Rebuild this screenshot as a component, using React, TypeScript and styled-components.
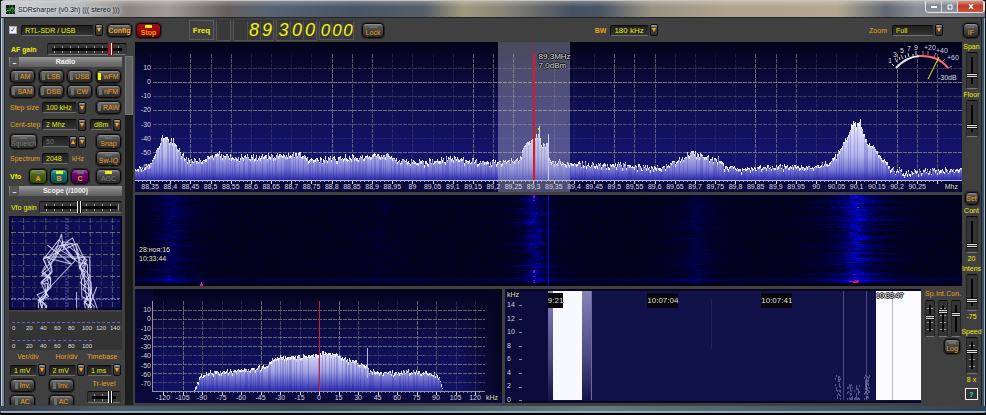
import React from "react";
import styled, { createGlobalStyle, css } from "styled-components";

const GlobalStyle = createGlobalStyle`
  *, *::before, *::after { box-sizing: border-box; }
  html, body { margin: 0; padding: 0; background: #000; }
  body, button, input, select {
    font-family: "Liberation Sans", Arial, sans-serif;
    font-size: 7px;
    line-height: 9px;
  }
`;

/* ---------- data helpers ---------- */

type Point = [number, number];

function makeRandom(seed: number) {
  let a = seed;
  return () => {
    a = (a + 0x6d2b79f5) | 0;
    let t = Math.imul(a ^ (a >>> 15), 1 | a);
    t = (t + Math.imul(t ^ (t >>> 7), 61 | t)) ^ t;
    return ((t ^ (t >>> 14)) >>> 0) / 4294967296;
  };
}

function levelAt(points: Point[], x: number) {
  for (let i = 1; i < points.length; i++) {
    if (x <= points[i][0]) {
      const [x0, y0] = points[i - 1];
      const [x1, y1] = points[i];
      return y0 + ((y1 - y0) * (x - x0)) / (x1 - x0);
    }
  }
  return points[points.length - 1][1];
}

function buildTrace(points: Point[], base: number, noise: number, seed: number) {
  const rnd = makeRandom(seed);
  const from = points[0][0];
  const to = points[points.length - 1][0];
  let fill = `M${from} ${base}`;
  let tips = "";
  let streaks = "";
  for (let x = from; x < to; x++) {
    const y = Math.min(base - 1, Math.round(levelAt(points, x) + (rnd() + rnd() - 1) * noise));
    fill += `V${y}h1`;
    tips += `M${x} ${y}h1v${1 + Math.floor(rnd() * 3)}h-1z`;
    if (rnd() > 0.6) streaks += `M${x} ${y + 3}h1V${base}h-1z`;
  }
  return { fill: `${fill}V${base}z`, tips, streaks };
}

const RF_POINTS: Point[] = [
  [0, 127], [6, 126], [10, 125], [15, 122], [20, 111], [24, 103], [27, 94], [31, 95], [34, 100], [38, 99],
  [43, 108], [50, 116], [57, 119], [66, 119], [72, 115], [84, 113], [100, 116], [120, 115], [150, 114],
  [166, 112], [175, 117], [195, 117], [215, 115], [240, 113], [254, 114], [262, 117], [280, 120],
  [300, 119], [318, 116], [340, 119], [355, 120], [375, 119], [385, 116], [390, 102], [398, 98],
  [402, 93], [404, 87], [406, 101], [412, 104], [415, 118], [430, 122], [460, 122], [490, 123],
  [510, 125], [530, 125], [542, 118], [552, 113], [558, 110], [566, 114], [586, 118], [589, 124],
  [605, 127], [640, 124], [665, 125], [680, 125], [694, 121], [702, 113], [709, 100], [715, 88],
  [718, 79], [721, 84], [725, 80], [728, 92], [732, 101], [737, 103], [744, 114], [752, 122],
  [758, 128], [775, 130], [800, 128], [827, 127],
];

const IF_POINTS: Point[] = [
  [59, 101], [62, 94], [66, 87], [72, 84], [85, 83], [100, 82], [118, 80], [132, 77], [138, 70], [152, 68],
  [170, 67], [188, 64], [200, 65], [212, 70], [226, 75], [231, 77], [234, 81], [248, 84], [270, 83],
  [290, 84], [302, 86], [305, 91], [308, 101],
];

const rfTrace = buildTrace(RF_POINTS, 138, 4, 11);
const ifTrace = buildTrace(IF_POINTS, 102, 3, 5);

const range = (n: number) => Array.from({ length: n }, (_, i) => i);

const RF_LABELS = range(39).map((i) => String((8835 + i * 5) / 100).replace(".", ","));
const IF_LABELS = range(17).map((i) => String(-120 + i * 15));

interface HotSpot { x: number; w: number; gain: number; }
const HOT_SPOTS: HotSpot[] = [
  { x: 36, w: 17, gain: 0.5 },
  { x: 399, w: 11, gain: 0.85 },
  { x: 560, w: 18, gain: 0.3 },
  { x: 721, w: 19, gain: 1.15 },
  { x: 245, w: 26, gain: 0.08 },
];

function buildWaterfall() {
  const rnd = makeRandom(77);
  const levels: string[] = Array(12).fill("");
  let hot = "";
  for (let y = 0; y < 88; y++) {
    const band = y > 78 ? 1.25 : 1;
    const floor = y > 82 && y < 87 ? 0.12 : 0;
    const spots = HOT_SPOTS.map((s) => ({
      x: s.x + (rnd() - 0.5) * 10,
      w: s.w * (0.35 + rnd() * 1.1),
      gain: s.gain * (0.45 + rnd() * 0.6) * band,
    }));
    for (let x = 0; x < 827; x += 2) {
      let v = floor + rnd() * 0.1;
      for (const s of spots) {
        const d = Math.abs(x - s.x) / s.w;
        if (d < 5) v += s.gain * Math.exp(-d * 1.1) * (0.5 + rnd() * 0.6);
      }
      const level = Math.min(11, Math.floor(v * 12));
      if (level > 0) levels[level] += `M${x} ${y}h2v1h-2z`;
      if (v > 1.18 || (x === 398 && (y < 6 || y > 74) && rnd() > 0.4)) hot += `M${x} ${y}h2v1h-2z`;
    }
  }
  return { levels, hot };
}
const waterfall = buildWaterfall();

function buildScope() {
  const rnd = makeRandom(23);
  const lines: string[] = [];
  for (let i = 0; i < 6; i++) {
    const pts: string[] = [];
    for (let y = 96; y > 38; y -= 6) pts.push(`${25 + (94 - y) * 0.17 + rnd() * 12},${y + rnd() * 7}`);
    pts.push(`${42 + rnd() * 12},${22 + rnd() * 18}`);
    pts.push(`${56 + rnd() * 12},${24 + rnd() * 20}`);
    for (let y = 40; y < 98; y += 7) pts.push(`${66 + (y - 34) * 0.15 + rnd() * 12},${y + rnd() * 7}`);
    lines.push(pts.join(" "));
  }
  lines.push("46,36 52,18 54,32 57,26 63,22 68,34 73,60 80,72 88,94");
  lines.push("38,29 62,48 34,41 80,41 81,94", "38,74 66,44 54,30");
  lines.push("67,94 67,76", "78,94 87,71");
  return lines;
}
const scopeLines = buildScope();

function buildSonogramNoise() {
  const rnd = makeRandom(4);
  let out = "";
  for (let i = 0; i < 150; i++) {
    const column = [330, 342, 349, 359][Math.floor(rnd() * 4)];
    const x = Math.round(column + rnd() * 5);
    const y = Math.round((column === 330 || column === 359 ? 86 : 95) + rnd() * 24);
    out += `M${x} ${Math.min(y, 109)}h1v2h-1z`;
  }
  return out;
}
const sonogramNoise = buildSonogramNoise();

/* ---------- window chrome ---------- */

const Window = styled.div`
  height: 100vh;
  display: flex;
  flex-direction: column;
  padding: 0 5px 9px;
  border-radius: 5px;
  overflow: hidden;
  background:
    linear-gradient(#000, #000) bottom / 100% 2px no-repeat,
    linear-gradient(#a9b9c6, #8497a6) 0 calc(100% - 2px) / 100% 2px no-repeat,
    linear-gradient(90deg, #333f4a, #4c5d6c 12%, #39495a 30%, #667880 60%, #2f4052) bottom / 100% 9px no-repeat,
    linear-gradient(90deg, #23282e 0 1px, #c3cdd6 1px 2px, #75879a 2px 4px, #252a30 4px 5px, transparent 5px) left / 5px 100% no-repeat,
    linear-gradient(90deg, #1c2026 0 1px, #37516b 1px 3px, #9fb4c6 3px 4px, #111 4px) right / 5px 100% no-repeat,
    #3f3f3f;
`;

const TitleBar = styled.header`
  height: 18px;
  flex: none;
  display: flex;
  align-items: flex-start;
  margin: 0 -4px;
  padding-left: 5px;
  border-top: 1px solid #c9c3bb;
  border-bottom: 1px solid #22262b;
  background:
    linear-gradient(rgba(255, 255, 255, 0.28), transparent 6px),
    linear-gradient(90deg, #c3c8cf 0, #aeb2b8 8%, #8d8580 13%, #a09c98 17%, #65605f 23%, #596473 27%, #4a5564 36%,
      #565e69 43%, #a1997f 47%, #8a8577 51%, #465161 58%, #4b5563 61%, #9a9283 66%, #b1a48f 74%, #b3a791 85%,
      #606872 90%, #8d9096 93%, #7b7f85 100%);
`;

const AppIcon = styled.svg`
  width: 9px;
  height: 9px;
  margin: 4px 3px 0 0;
`;

const Title = styled.h1`
  margin: 4px 0 0;
  font-size: 7px;
  line-height: 9px;
  font-weight: 400;
  color: #16181c;
  text-shadow: 0 0 4px #fff, 0 0 6px #fff;
  flex: 1;
`;

const WindowButtons = styled.div`
  display: flex;
  border: 1px solid #e6e9ec;
  border-top: 0;
  border-radius: 0 0 4px 4px;
  overflow: hidden;
`;

const WindowButton = styled.button<{ $close?: boolean }>`
  width: ${(p) => (p.$close ? 26 : 16)}px;
  height: 11px;
  padding: 0;
  border: 0;
  border-right: 1px solid #d6d9dd;
  display: flex;
  align-items: center;
  justify-content: center;
  background: ${(p) =>
    p.$close ? "linear-gradient(#d99383, #bb3a24 45%, #c9563a)" : "linear-gradient(#b9bec5, #7d848d 45%, #9197a0)"};
`;

/* ---------- shared controls ---------- */

const Caption = styled.span<{ $bright?: boolean; $bold?: boolean; $width?: number }>`
  flex: none;
  color: ${(p) => (p.$bright ? "#eeee10" : "#e6a01c")};
  font-weight: ${(p) => (p.$bold ? 700 : 400)};
  width: ${(p) => (p.$width ? `${p.$width}px` : "auto")};
  white-space: nowrap;
`;

const Row = styled.div<{ $height?: number; $gap?: number; $spread?: boolean }>`
  display: flex;
  align-items: center;
  min-height: ${(p) => p.$height ?? 15}px;
  gap: ${(p) => p.$gap ?? 0}px;
  justify-content: ${(p) => (p.$spread ? "space-between" : "flex-start")};
`;

type Tone = "gray" | "red" | "green" | "teal" | "purple";
const TONES: Record<Tone, string> = {
  gray: "linear-gradient(#9a9a9a, #5c5c5c 18%, #404040 55%, #2a2a2a)",
  red: "linear-gradient(#8d1515, #a80a0a 30%, #6d0202)",
  green: "linear-gradient(#8aa84a, #4d6b17 30%, #31480c)",
  teal: "linear-gradient(#4fc0c0, #0e7478 30%, #064b50)",
  purple: "linear-gradient(#b04fb4, #6d0873 30%, #45024b)",
};

const KeyButton = styled.button<{ $tone?: Tone; $width?: number; $stack?: boolean; $dim?: boolean }>`
  flex: none;
  width: ${(p) => p.$width ?? 25}px;
  height: ${(p) => (p.$stack ? 15 : 13)}px;
  padding: 0;
  display: flex;
  flex-direction: ${(p) => (p.$stack ? "column" : "row")};
  align-items: center;
  justify-content: center;
  gap: ${(p) => (p.$stack ? 1 : 2)}px;
  border: 1px solid #0a0a0a;
  border-radius: 4px;
  background: ${(p) => TONES[p.$tone ?? "gray"]};
  box-shadow: 0 0 0 1px #262626;
  color: ${(p) => (p.$dim ? "#7d7d7d" : "#f0a01a")};
  white-space: nowrap;
  line-height: 7px;
`;

const Led = styled.i<{ $on?: boolean; $wide?: boolean }>`
  flex: none;
  width: ${(p) => (p.$wide ? 7 : 3)}px;
  height: ${(p) => (p.$wide ? 3 : 7)}px;
  background: ${(p) => (p.$on ? "#f6ee08" : "#6c6c6c")};
`;

function SideKey({ label, on }: { label: string; on?: boolean }) {
  return (
    <KeyButton type="button" aria-pressed={!!on}>
      <Led $on={on} />
      {label}
    </KeyButton>
  );
}

function TopKey(props: { label: string; on?: boolean; tone?: Tone; width?: number; dim?: boolean; bold?: boolean }) {
  return (
    <KeyButton type="button" aria-pressed={!!props.on} $stack $tone={props.tone} $width={props.width} $dim={props.dim}>
      <Led $wide $on={props.on} />
      {props.bold ? <b>{props.label}</b> : props.label}
    </KeyButton>
  );
}

const ComboFrame = styled.label<{ $width: number }>`
  flex: none;
  width: ${(p) => p.$width}px;
  display: flex;
  align-items: center;
  gap: 1px;
`;

const field = css`
  height: 11px;
  padding: 0 0 0 3px;
  border: 1px solid;
  border-color: #0a0a0a #303030 #6c6c6c #161616;
  border-radius: 2px;
  background: linear-gradient(#1e1e1e, #343434);
  color: #e6ee12;
`;

const ComboSelect = styled.select<{ $large?: boolean }>`
  ${field}
  appearance: none;
  flex: 1;
  min-width: 0;
  font-size: ${(p) => (p.$large ? 8 : 7)}px;
`;

const ArrowBox = styled.span`
  flex: none;
  width: 8px;
  height: 12px;
  display: flex;
  align-items: center;
  justify-content: center;
  border: 1px solid #0c0c0c;
  border-radius: 2px;
  background: linear-gradient(#b5b5b5, #4c4c4c 25%, #303030);
  pointer-events: none;
`;

function Arrow({ up }: { up?: boolean }) {
  return (
    <ArrowBox>
      <svg width="4" height="4" viewBox="0 0 4 4" aria-hidden="true">
        <path d={up ? "M0 4h4L2 0z" : "M0 0h4L2 4z"} fill="#ffa51a" />
      </svg>
    </ArrowBox>
  );
}

function Combo({ name, value, width, large }: { name: string; value: string; width: number; large?: boolean }) {
  return (
    <ComboFrame $width={width}>
      <ComboSelect aria-label={name} $large={large} defaultValue={value}>
        <option>{value}</option>
      </ComboSelect>
      <Arrow />
    </ComboFrame>
  );
}

const Field = styled.input<{ $width: number }>`
  ${field}
  flex: none;
  width: ${(p) => p.$width}px;
  &:disabled { color: #777; }
`;

const Slider = styled.input<{ $red?: boolean }>`
  appearance: none;
  flex: 1;
  min-width: 0;
  height: 12px;
  margin: 0;
  border: 1px solid;
  border-color: #0a0a0a #333 #777 #222;
  border-radius: 2px;
  background:
    linear-gradient(#050505, #050505) center / calc(100% - 8px) 3px no-repeat,
    repeating-linear-gradient(90deg, transparent 0 4px, #9a9a9a 4px 5px, transparent 5px 8px) center / calc(100% - 4px) 7px no-repeat,
    #363636;
  &::-webkit-slider-thumb {
    appearance: none;
    width: 5px;
    height: 12px;
    background: ${(p) =>
      p.$red
        ? "linear-gradient(90deg, #b01818 0 3px, #fff 3px 4px, #701010 4px)"
        : "linear-gradient(90deg, #eee 0 1px, #222 1px 3px, #eee 3px 4px, #111 4px)"};
  }
`;

const Fader = styled.input<{ $ticks?: boolean; $narrow?: boolean }>`
  appearance: none;
  writing-mode: vertical-lr;
  direction: rtl;
  flex: none;
  width: ${(p) => (p.$narrow ? 10 : 12)}px;
  height: 37px;
  margin: 0;
  border: 1px solid;
  border-color: #0a0a0a #222 #777 #222;
  border-radius: 2px;
  background:
    linear-gradient(#050505, #050505) center / 2px calc(100% - 8px) no-repeat,
    ${(p) =>
      p.$ticks
        ? "repeating-linear-gradient(transparent 0 4px, #999 4px 5px, transparent 5px 7px) center / 6px calc(100% - 6px) no-repeat,"
        : ""}
    #343434;
  &::-webkit-slider-thumb {
    appearance: none;
    width: ${(p) => (p.$narrow ? 8 : 10)}px;
    height: 5px;
    background: linear-gradient(#111 0 1px, #ddd 1px 2px, #333 2px 3px, #ddd 3px 4px, #111 4px);
  }
`;

/* ---------- toolbar ---------- */

const Toolbar = styled.div`
  height: 24px;
  flex: none;
  display: flex;
  align-items: center;
  padding: 0 2px 0 4px;
  background: #404040;
`;

const Tick = styled.input`
  appearance: none;
  width: 8px;
  height: 8px;
  margin: 0 4px 0 0;
  border: 1px solid #aab;
  background: #eef;
  display: flex;
  align-items: center;
  justify-content: center;
  &:checked::after {
    content: "✓";
    font-family: "DejaVu Sans", sans-serif;
    color: #26358c;
  }
`;

const Cluster = styled.div<{ $push?: boolean; $gap: number; $after?: number }>`
  display: flex;
  align-items: center;
  gap: ${(p) => p.$gap}px;
  margin-left: ${(p) => (p.$push ? "auto" : 0)};
  margin-right: ${(p) => p.$after ?? 0}px;
`;

const Cells = styled.div`
  display: flex;
  border: 1px solid #555;
  border-top-color: #333;
  background: #3a3a3a;
`;

const Cell = styled.span<{ $small?: boolean }>`
  width: ${(p) => (p.$small ? 11 : 13)}px;
  height: ${(p) => (p.$small ? 17 : 19)}px;
  line-height: ${(p) => (p.$small ? 17 : 19)}px;
  font-size: ${(p) => (p.$small ? 17 : 18)}px;
  font-style: italic;
  text-align: center;
  color: #f4f410;
  & + & { border-left: 1px solid #505050; }
`;

const FreqLabel = styled.span`
  width: 25px;
  height: 20px;
  line-height: 20px;
  border: 1px solid #5a5a5a;
  font-size: 8px;
  font-weight: 700;
  text-align: center;
  color: #f4f410;
`;

function Digits({ value, small }: { value: string; small?: boolean }) {
  return (
    <Cells>
      {value.split("").map((d, i) => (
        <Cell key={i} $small={small}>{d}</Cell>
      ))}
    </Cells>
  );
}

/* ---------- layout ---------- */

const Content = styled.div`
  flex: 1;
  min-height: 0;
  display: flex;
  background: #404040;
`;

const Sidebar = styled.aside`
  flex: none;
  width: 130px;
  padding-left: 4px;
  display: flex;
  flex-direction: column;
`;

const SidebarBody = styled.div`
  flex: 1;
  min-height: 0;
  display: flex;
  gap: 3px;
  padding-right: 2px;
  margin-bottom: 1px;
`;

const Panels = styled.div`
  flex: 1;
  min-width: 0;
  overflow: hidden;
`;

const ScrollTrack = styled.div`
  width: 8px;
  background: #1c1c1c;
`;

const ScrollThumb = styled.div`
  height: 17%;
  border: 1px solid #777;
  background: #606060;
`;

const PanelHeader = styled.h2`
  position: relative;
  margin: 1px 0 2px;
  height: 10px;
  font-size: 7px;
  line-height: 10px;
  font-weight: 700;
  text-align: center;
  color: #f2f2f2;
  background: linear-gradient(#999, #777 50%, #5d5d5d);
`;

const Collapse = styled.button`
  position: absolute;
  left: 1px;
  top: 0;
  width: 9px;
  height: 10px;
  padding: 0;
  border: 0;
  background: #555;
  color: #fff;
  font-weight: 700;
`;

const Controls = styled.div`
  padding: 0 1px;
`;

const ScopeView = styled.svg`
  display: block;
  width: 100%;
  height: 94px;
  background: #0d0d52;
`;

const Meters = styled.div`
  margin: 2px 0;
  height: 38px;
  padding: 10px 0 0 3px;
  background: #343434;
`;

const Scale = styled.div<{ $cells: number }>`
  display: grid;
  grid-template-columns: repeat(8, 14px);
  width: ${(p) => p.$cells * 14 - 4}px;
  height: 14px;
  padding-top: 1px;
  margin-bottom: 4px;
  font-size: 6px;
  color: #ddd;
  border-top: 1px dashed #6464d8;
`;

const ThreeColumns = styled.div`
  display: grid;
  grid-template-columns: 36px 36px 34px;
  justify-content: space-between;
  padding: 0 1px;
`;

const Column = styled.div<{ $gap: number; $center?: boolean }>`
  display: flex;
  flex-direction: column;
  align-items: ${(p) => (p.$center ? "center" : "stretch")};
  gap: ${(p) => p.$gap}px;
`;

const Main = styled.main`
  flex: 1;
  min-width: 0;
  display: grid;
  grid-template-columns: minmax(0, 1fr);
  grid-template-rows: minmax(0, 150fr) minmax(0, 91fr) minmax(0, 114fr);
  gap: 3px;
  padding-bottom: 3px;
`;

const BottomRow = styled.div`
  display: grid;
  grid-template-columns: minmax(0, 367fr) minmax(0, 416fr) 38px;
  grid-template-rows: minmax(0, 1fr);
  gap: 3px;
`;

const Layers = styled.section`
  position: relative;
  display: grid;
  grid-template: minmax(0, 1fr) / minmax(0, 1fr);
  overflow: hidden;
  & > * { grid-area: 1 / 1; }
`;

const Plot = styled.svg`
  display: block;
  width: 100%;
  height: 100%;
`;

const XLabels = styled.div<{ $count: number; $left: number; $right: number }>`
  align-self: end;
  height: 10px;
  display: grid;
  grid-template-columns: repeat(${(p) => p.$count}, minmax(0, 1fr));
  padding-left: ${(p) => p.$left}%;
  padding-right: ${(p) => p.$right}%;
  color: #d6d6de;
  & > span {
    display: flex;
    justify-content: center;
    white-space: nowrap;
  }
`;

const YAxis = styled.div<{ $rows: string; $left?: boolean }>`
  display: grid;
  grid-template-rows: ${(p) => p.$rows};
  width: 16px;
  padding-left: ${(p) => (p.$left ? 2 : 0)}px;
  text-align: ${(p) => (p.$left ? "left" : "right")};
  line-height: 7px;
  color: #d6d6de;
`;

const YAxisLabels = styled.div`
  grid-row: 2;
  min-height: 0;
  display: flex;
  flex-direction: column;
  justify-content: space-between;
`;

function YLabels({ rows, labels, left }: { rows: string; labels: string[]; left?: boolean }) {
  return (
    <YAxis $rows={rows} $left={left}>
      <YAxisLabels>{labels.map((t) => <span key={t}>{t}</span>)}</YAxisLabels>
    </YAxis>
  );
}

const Overlay = styled.div<{ $left?: string; $right?: string; $top: string; $size?: number; $boxed?: boolean }>`
  position: absolute;
  left: ${(p) => p.$left ?? "auto"};
  right: ${(p) => p.$right ?? "auto"};
  top: ${(p) => p.$top};
  font-size: ${(p) => p.$size ?? 7}px;
  line-height: ${(p) => (p.$boxed ? 15 : 9)}px;
  background: ${(p) => (p.$boxed ? "#08080c" : "transparent")};
  color: #e2e2e2;
  white-space: nowrap;
  text-shadow: -1px 0 #000, 1px 0 #000, 0 -1px #000, 0 1px #000;
`;

const Meter = styled.svg`
  position: absolute;
  right: 0;
  top: 0;
  width: 78px;
  height: 46px;
`;

const Rail = styled.aside`
  flex: none;
  width: 19px;
  display: flex;
  flex-direction: column;
  justify-content: space-between;
  padding-bottom: 6px;
`;

const RailGap = styled.div`
  height: 4px;
`;

const FaderRow = styled.div`
  display: flex;
  justify-content: space-between;
  padding: 0 1px;
`;

const HelpButton = styled.button`
  width: 13px;
  height: 12px;
  padding: 0;
  margin-top: 3px;
  border: 1px solid #eee;
  background: #333;
  color: #16e0e0;
  font-weight: 700;
  line-height: 9px;
`;

/* ---------- plots ---------- */

const ROW_STRENGTH = [0.35, 0.85, 0.35, 0.8, 0.5, 0.15, 0.75];

function RfPlot() {
  return (
    <Plot viewBox="0 0 827 150" preserveAspectRatio="none" shapeRendering="crispEdges" aria-hidden="true">
      <defs>
        <linearGradient id="sky" x1="0" y1="0" x2="0" y2="1">
          <stop offset="0" stopColor="#03031a" />
          <stop offset="0.4" stopColor="#0e0e50" />
          <stop offset="0.75" stopColor="#14146c" />
          <stop offset="1" stopColor="#14146c" />
        </linearGradient>
        <linearGradient id="rfFill" gradientUnits="userSpaceOnUse" x1="0" y1="84" x2="0" y2="138">
          <stop offset="0" stopColor="#e4e4fa" />
          <stop offset="0.55" stopColor="#b4b4ec" />
          <stop offset="0.8" stopColor="#7b7bd6" />
          <stop offset="1" stopColor="#2b2bab" />
        </linearGradient>
      </defs>
      <rect width="827" height="150" fill="url(#sky)" />
      {ROW_STRENGTH.map((s, i) => (
        <path key={i} d={`M18 ${26.5 + i * 14}H827`} stroke="#8a8a78" strokeOpacity={s} strokeDasharray="4 1" />
      ))}
      {range(40).map((i) => (
        <path
          key={i}
          d={`M${Math.round(15 + i * 20.18) + 0.5} 12V138`}
          stroke="#8a8a7c"
          strokeOpacity={[0.1, 0.16, 0.75, 0.6, 0.6, 0.2, 0.22][i % 7]}
          strokeDasharray="4 1"
        />
      ))}
      <path d={rfTrace.fill} fill="url(#rfFill)" />
      <path d={rfTrace.streaks} fill="#2020a0" fillOpacity="0.22" />
      <path d={rfTrace.tips} fill="#f6f6ff" fillOpacity="0.9" />
      <path d="M413 92h1v46h-1z" fill="#d8d8f0" />
      <rect y="139" width="827" height="11" fill="#09093c" />
      <path d="M0 138.5H827" stroke="#b8b8d8" />
      {range(200).map((i) => (
        <path
          key={i}
          d={`M${Math.round(15 + (i - 3) * 4.036) + 0.5} 139v${(i - 3) % 5 === 0 ? 3 : 1}`}
          stroke="#d8d8e8"
          strokeOpacity={(i - 3) % 5 === 0 ? 1 : 0.6}
        />
      ))}
      <rect x="363" width="72" height="150" fill="#c8c8d8" fillOpacity="0.36" />
      <path d="M398 0h1v12h-1z" fill="#b02030" fillOpacity="0.7" />
      <path d="M398 12h2v126h-2z" fill="#e01824" />
      <path d="M403 86h2v2h-2z" fill="#f0e020" />
    </Plot>
  );
}

function SMeter() {
  const labels: [string, number, number, string][] = [
    ["1", 4, 21, "#ddd"], ["3", 9, 15, "#ddd"], ["5", 16, 11, "#ddd"], ["7", 23, 9, "#ddd"], ["9", 30, 8, "#ddd"],
    ["+20", 40, 8, "#c8d4ee"], ["+40", 52, 11, "#c8d4ee"], ["+60", 63, 18, "#c8d4ee"], ["-30dB", 54, 38, "#ddd"],
  ];
  return (
    <Meter viewBox="0 0 78 46" role="img" aria-label="Signal meter">
      <path d="M12 26Q22 15 35 14" fill="none" stroke="#e8e8e8" strokeWidth="2" />
      <path d="M35 14Q54 13 64 26" fill="none" stroke="#f07070" strokeWidth="2" />
      <path d="M10 24l-2-2M13 20l-2-4M19 17l-2-4M25 15l-1-4M32 13v-4M16 18l-1-3M22 16l-1-3M29 14v-2" stroke="#ccc" />
      <path d="M39 13V9M44 13V9M50 15l2-4M58 20l3-3M64 26l4-2" stroke="#e06868" />
      <path d="M44 37L55 15" stroke="#f4ee10" strokeWidth="1" />
      {labels.map(([text, x, y, fill]) => (
        <text key={text} x={x} y={y} fill={fill} fontSize="7">{text}</text>
      ))}
    </Meter>
  );
}

function WaterfallPlot() {
  return (
    <Plot viewBox="0 0 827 91" preserveAspectRatio="none" shapeRendering="crispEdges" aria-hidden="true">
      <rect width="827" height="91" fill="#01011a" />
      {waterfall.levels.map((d, i) => (
        <path key={i} d={d} fill={`rgb(0,0,${24 + i * 20})`} />
      ))}
      <path d={waterfall.hot} fill="#9010a8" />
      <path d="M413 0h1v91h-1z" fill="#0808b8" />
      <path d="M714 86h9v1h-9z M718 87h5v1h-5z" fill="#e01060" />
      <path d="M65 91v-2h1v-2h1v2h1v2z" fill="#e010a0" />
    </Plot>
  );
}

function IfPlot() {
  return (
    <Plot viewBox="0 0 367 114" preserveAspectRatio="none" shapeRendering="crispEdges" aria-hidden="true">
      <defs>
        <linearGradient id="ifFill" gradientUnits="userSpaceOnUse" x1="0" y1="62" x2="0" y2="102">
          <stop offset="0" stopColor="#e2e2fa" />
          <stop offset="0.5" stopColor="#a4a4e4" />
          <stop offset="1" stopColor="#2b2bab" />
        </linearGradient>
        <linearGradient id="ifSky" x1="0" y1="0" x2="0" y2="1">
          <stop offset="0" stopColor="#04041c" />
          <stop offset="0.5" stopColor="#0f0f54" />
          <stop offset="1" stopColor="#13136a" />
        </linearGradient>
        <linearGradient id="ifEdge" x1="0" y1="0" x2="1" y2="0">
          <stop offset="0" stopColor="#05051f" stopOpacity="0" />
          <stop offset="1" stopColor="#05051f" />
        </linearGradient>
      </defs>
      <rect width="367" height="114" fill="url(#ifSky)" />
      <rect width="18" height="114" fill="#070732" />
      <rect x="325" width="42" height="114" fill="url(#ifEdge)" />
      {range(9).map((i) => (
        <path key={i} d={`M18 ${21.5 + i * 9}H350`} stroke="#8a8a78" strokeOpacity={i % 3 === 2 ? 0.4 : 0.7} strokeDasharray="4 1" />
      ))}
      {range(17).map((i) => (
        <path
          key={i}
          d={`M${Math.round(28 + i * 19.5) + 0.5} 12V102`}
          stroke="#8a8a7c"
          strokeOpacity={[0.2, 0.75, 0.5, 0.25][i % 4]}
          strokeDasharray="4 1"
        />
      ))}
      <path d={ifTrace.fill} fill="url(#ifFill)" />
      <path d={ifTrace.streaks} fill="#2020a0" fillOpacity="0.25" />
      <path d={ifTrace.tips} fill="#f6f6ff" fillOpacity="0.9" />
      <path d="M232 59h1v30h-1z" fill="#b8b8e0" />
      <rect y="103" width="367" height="11" fill="#09093c" />
      <path d="M17.5 12V102.5H350" fill="none" stroke="#9090b0" />
      {range(82).map((i) => (
        <path
          key={i}
          d={`M${Math.round(28 + i * 3.9) + 0.5} 103v${i % 5 === 0 ? 3 : 1}`}
          stroke="#d8d8e8"
          strokeOpacity={i % 5 === 0 ? 1 : 0.6}
        />
      ))}
      <path d="M184 12h1v90h-1z" fill="#d01c30" />
    </Plot>
  );
}

function SonogramPlot() {
  return (
    <Plot viewBox="0 0 416 114" preserveAspectRatio="none" shapeRendering="crispEdges" aria-hidden="true">
      <defs>
        <linearGradient id="haze" x1="0" y1="0" x2="0" y2="1">
          <stop offset="0" stopColor="#8484b8" />
          <stop offset="0.6" stopColor="#4a4a84" />
          <stop offset="1" stopColor="#14144c" />
        </linearGradient>
      </defs>
      <rect width="416" height="114" fill="#12124a" />
      <rect width="43" height="114" fill="#0b0b3c" />
      <rect width="416" height="2" fill="#05051e" />
      <rect y="112" width="416" height="2" fill="#070726" />
      {range(8).map((i) => (
        <path key={i} d={`M14 ${Math.round(16 + i * 13.6) + 0.5}h3`} stroke="#8c8ca8" />
      ))}
      <rect x="43" y="2" width="5" height="109" fill="url(#haze)" />
      <rect x="77" y="2" width="10" height="109" fill="url(#haze)" />
      <path d="M86 2h1v109h-1z" fill="#6c6c9c" />
      <rect x="48" y="2" width="29" height="109" fill="#f8f8ff" />
      <path d="M206 10h1v50h-1z" fill="#22225a" />
      <path d="M338 2h1v109h-1z M361 2h1v109h-1z" fill="#4a4a80" />
      <path d={sonogramNoise} fill="#9a9ac0" fillOpacity="0.5" />
      <rect x="371" y="2" width="45" height="109" fill="#fafaff" />
      <path d="M387 2h1v109h-1z" fill="#b8b8cc" />
    </Plot>
  );
}

function Scope() {
  return (
    <ScopeView viewBox="0 0 112 94" preserveAspectRatio="none" role="img" aria-label="Scope trace">
      {range(8).map((i) => (
        <path key={i} d={`M2 ${5.5 + i * 11}H110`} stroke="#8a8a78" strokeOpacity={i % 2 ? 0.75 : 0.35} strokeDasharray="5 2" />
      ))}
      {range(10).map((i) => (
        <path key={i} d={`M${3.5 + i * 11} 2V94`} stroke="#8a8a78" strokeOpacity={i % 2 ? 0.6 : 0.3} strokeDasharray="5 2" />
      ))}
      <path d="M2 83.5H110M56.5 2V94" stroke="#5a5ad8" strokeDasharray="2 1" />
      {scopeLines.map((pts, i) => (
        <polyline key={i} points={pts} fill="none" stroke="#dedeff" strokeOpacity="0.85" strokeWidth="1" />
      ))}
      <path d="M0 0H112V94H0z" fill="none" stroke="#04041c" strokeOpacity="0.7" strokeWidth="4" />
    </ScopeView>
  );
}

/* ---------- page sections ---------- */

function TopToolbar() {
  return (
    <Toolbar>
      <Tick type="checkbox" aria-label="Source enabled" defaultChecked />
      <Cluster $gap={4} $after={28}>
        <Combo name="Source" value="RTL-SDR / USB" width={82} />
        <KeyButton type="button"><b>Config</b></KeyButton>
        <TopKey label="Stop" tone="red" on bold />
      </Cluster>
      <Cluster $gap={2} $after={8}>
        <FreqLabel>Freq</FreqLabel>
        <Digits value=" " />
        <Digits value=" 89" />
        <Digits value="300" />
        <Digits value="000" small />
      </Cluster>
      <TopKey label="Lock" width={22} />
      <Cluster $gap={4} $push>
        <Caption $bold>BW</Caption>
        <Combo name="BW" value="180 kHz" width={48} large />
      </Cluster>
      <Cluster $gap={5} $push $after={20}>
        <Caption>Zoom</Caption>
        <Combo name="Zoom" value="Full" width={51} />
      </Cluster>
      <TopKey label="IF" width={16} />
    </Toolbar>
  );
}

const MODES = [["AM", "LSB", "USB", "wFM"], ["SAM", "DSB", "CW", "nFM"]];

function SidePanel() {
  return (
    <Sidebar>
      <Row $height={14} $gap={8}>
        <Caption $bright $bold $width={30}>&nbsp;AF gain</Caption>
        <Slider $red type="range" aria-label="AF gain" defaultValue={82} />
        <span />
      </Row>
      <SidebarBody>
        <Panels>
          <PanelHeader><Collapse type="button" aria-label="Collapse Radio">–</Collapse>Radio</PanelHeader>
          <Controls>
            {MODES.map((modes) => (
              <Row key={modes[0]} $spread>
                {modes.map((m) => <SideKey key={m} label={m} on={m === "wFM"} />)}
              </Row>
            ))}
            <Row $height={17} $spread>
              <Row><Caption $width={32}>Step size</Caption><Combo name="Step size" value="100 kHz" width={44} /></Row>
              <SideKey label="RAW" />
            </Row>
            <Row $height={17} $spread>
              <Row><Caption $width={32}>Cent-step</Caption><Combo name="Cent-step" value="2 Mhz" width={44} /></Row>
              <Combo name="Unit" value="dBm" width={31} />
            </Row>
            <Row $height={17} $spread>
              <Row>
                <Cluster $gap={0} $after={5}><TopKey label="Squelch" width={27} dim /></Cluster>
                <Field $width={27} aria-label="Squelch level" defaultValue="50" disabled />
                <Cluster $gap={1}><Arrow up /><Arrow /></Cluster>
              </Row>
              <TopKey label="Snap" />
            </Row>
            <Row $height={17} $spread>
              <Row>
                <Caption $width={32}>Spectrum</Caption>
                <Cluster $gap={3}><Field $width={27} aria-label="Spectrum" defaultValue="2048" /><Caption>kHz</Caption></Cluster>
              </Row>
              <TopKey label="Sw-IQ" />
            </Row>
            <Row $height={18} $spread>
              <Row $gap={3}>
                <Caption $bright $bold $width={16}>Vfo</Caption>
                <TopKey label="A" tone="green" width={18} bold />
                <TopKey label="B" tone="teal" width={18} bold on />
                <TopKey label="C" tone="purple" width={18} bold />
              </Row>
              <TopKey label="AGC" on dim />
            </Row>
          </Controls>
          <PanelHeader><Collapse type="button" aria-label="Collapse Scope">–</Collapse>Scope (/1000)</PanelHeader>
          <Row $height={18}>
            <Caption $bright $width={30}>&nbsp;Vfo gain</Caption>
            <Slider type="range" aria-label="Vfo gain" defaultValue={49} />
          </Row>
          <Scope />
          <Meters>
            <Scale $cells={8}>{range(8).map((i) => <span key={i}>{i * 20}</span>)}</Scale>
            <Scale $cells={6}>{range(6).map((i) => <span key={i}>{i * 20}</span>)}</Scale>
          </Meters>
          <ThreeColumns>
            <Column $gap={3}>
              <Column $gap={0} $center><Caption>Ver/div</Caption></Column>
              <Combo name="Ver/div" value="1 mV" width={36} />
              <SideKey label="Inv." />
              <SideKey label="AC" />
            </Column>
            <Column $gap={3}>
              <Column $gap={0} $center><Caption>Hor/div</Caption></Column>
              <Combo name="Hor/div" value="2 mV" width={36} />
              <SideKey label="Inv." />
              <SideKey label="AC" />
            </Column>
            <Column $gap={3}>
              <Caption>Timebase</Caption>
              <Combo name="Timebase" value="1 ms" width={34} />
              <Column $gap={0} $center><Caption>Tr-level</Caption></Column>
              <Row $height={11}><Slider type="range" aria-label="Tr-level" defaultValue={75} /></Row>
            </Column>
          </ThreeColumns>
        </Panels>
        <ScrollTrack><ScrollThumb /></ScrollTrack>
      </SidebarBody>
    </Sidebar>
  );
}

export default function App() {
  return (
    <>
      <GlobalStyle />
      <Window>
        <TitleBar>
          <AppIcon viewBox="0 0 9 9" aria-hidden="true">
            <path d="M0 0h9v9H0z" fill="#0a1a0e" />
            <path d="M0 3.5h9M0 6.5h9M3.5 0v9M6.5 0v9" stroke="#1d5a2c" strokeWidth="1" />
            <path d="M0 7l2-2 2 1 2-4 3 4" fill="none" stroke="#35c04e" />
          </AppIcon>
          <Title>SDRsharper (v0.3h) ((( stereo )))</Title>
          <WindowButtons>
            <WindowButton type="button" aria-label="Minimize">
              <svg width="6" height="2"><path d="M0 0h6v2H0z" fill="#fff" /></svg>
            </WindowButton>
            <WindowButton type="button" aria-label="Maximize">
              <svg width="6" height="6"><path d="M1 1h4v4H1z" fill="none" stroke="#fff" strokeWidth="1" /></svg>
            </WindowButton>
            <WindowButton type="button" aria-label="Close" $close>
              <svg width="6" height="5" viewBox="0 0 6 5"><path d="M1 0l4 5M5 0L1 5" stroke="#fff" strokeWidth="1.5" /></svg>
            </WindowButton>
          </WindowButtons>
        </TitleBar>
        <TopToolbar />
        <Content>
          <SidePanel />
          <Main>
            <Layers>
              <RfPlot />
              <YLabels rows="22fr 106fr 22fr" labels={["10", "0", "-10", "-20", "-30", "-40", "-50", "-60"]} />
              <XLabels $count={39} $left={0.6} $right={4.2}>
                {RF_LABELS.map((t) => <span key={t}>{t}</span>)}
              </XLabels>
              <Overlay $right="4px" $top="140px">Mhz</Overlay>
              <Overlay $left="48.8%" $top="10px" $size={8}>89,3MHz<br />7,0dBm</Overlay>
              <SMeter />
            </Layers>
            <Layers>
              <WaterfallPlot />
              <Overlay $left="4px" $top="50px">28:ноя:16<br />10:33:44</Overlay>
            </Layers>
            <BottomRow>
              <Layers>
                <IfPlot />
                <YLabels rows="17fr 81fr 16fr" labels={["10", "0", "-10", "-20", "-30", "-40", "-50", "-60", "-70"]} />
                <XLabels $count={17} $left={5} $right={4.7}>
                  {IF_LABELS.map((t) => <span key={t}>{t}</span>)}
                </XLabels>
                <Overlay $right="4px" $top="104px">kHz</Overlay>
              </Layers>
              <Layers>
                <SonogramPlot />
                <YLabels left rows="12fr 102fr 0fr" labels={["14", "12", "10", "8", "6", "4", "2", "0"]} />
                <Overlay $left="2px" $top="1px">kHz</Overlay>
                <Overlay $left="10.3%" $top="4px" $size={8} $boxed>9:21</Overlay>
                <Overlay $left="34.2%" $top="4px" $size={8} $boxed>10:07:04</Overlay>
                <Overlay $left="61.6%" $top="4px" $size={8} $boxed>10:07:41</Overlay>
                <Overlay $left="89.2%" $top="2px">10:33:47</Overlay>
              </Layers>
              <Column $gap={2}>
                <FaderRow>
                  <Caption>Sp.</Caption><Caption>Int.</Caption><Caption>Con.</Caption>
                </FaderRow>
                <FaderRow>
                  <Fader $narrow $ticks type="range" aria-label="Sp." defaultValue={53} />
                  <Fader $narrow $ticks type="range" aria-label="Int." defaultValue={72} />
                  <Fader $narrow type="range" aria-label="Con." defaultValue={62} />
                </FaderRow>
                <Cluster $gap={0} $push $after={2}><TopKey label="Log" width={16} /></Cluster>
              </Column>
            </BottomRow>
          </Main>
          <Rail>
            <Column $gap={1} $center>
              <Caption $bright>Span</Caption>
              <Fader type="range" aria-label="Span" defaultValue={32} />
              <Caption $bright>Floor</Caption>
              <Fader type="range" aria-label="Floor" defaultValue={22} />
            </Column>
            <Column $gap={1} $center>
              <KeyButton type="button" $width={14}>Set</KeyButton>
              <Caption $bright>Cont</Caption>
              <Fader type="range" aria-label="Contrast" defaultValue={12} />
              <Caption $bright>20</Caption>
              <Caption $bright>Intens</Caption>
              <Fader type="range" aria-label="Intensity" defaultValue={24} />
              <Caption $bright>-75</Caption>
              <RailGap />
              <Caption $bright>Speed</Caption>
              <Fader $ticks type="range" aria-label="Speed" defaultValue={65} />
              <Caption $bright>8 x</Caption>
              <HelpButton type="button" aria-label="Help">?</HelpButton>
            </Column>
          </Rail>
        </Content>
      </Window>
    </>
  );
}
